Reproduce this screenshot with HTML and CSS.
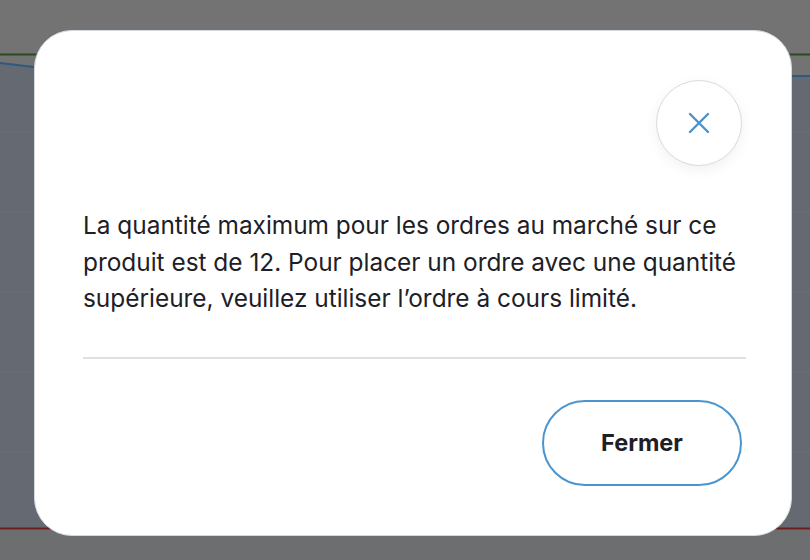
FILE: index.html
```html
<!DOCTYPE html>
<html lang="fr">
<head>
    <meta charset="UTF-8">
    <meta name="viewport" content="width=device-width, initial-scale=1.0">
    <title>Quantité maximum</title>
    <link rel="stylesheet" href="styles.css">
</head>
<body>
    <!-- Price chart behind the dialog -->
    <div class="chart">
        <svg width="810" height="560" viewBox="0 0 810 560">
            <path d="M0 63 L34 67 L400 70 L795 76 L810 76 L810 528 L0 528 Z" fill="#656a72"/>
            <g stroke="#6a6f77" stroke-width="1">
                <line x1="0" y1="132" x2="810" y2="132"/>
                <line x1="0" y1="212" x2="810" y2="212"/>
                <line x1="0" y1="292" x2="810" y2="292"/>
                <line x1="0" y1="372" x2="810" y2="372"/>
                <line x1="0" y1="452" x2="810" y2="452"/>
            </g>
            <line x1="0" y1="54.5" x2="810" y2="54.5" stroke="#2c4a22" stroke-width="2"/>
            <polyline points="0,63 34,67 400,70 795,76 810,76" fill="none" stroke="#2d5a80" stroke-width="2"/>
            <line x1="0" y1="528.5" x2="810" y2="528.5" stroke="#6e1c1e" stroke-width="2"/>
            <rect x="0" y="530" width="810" height="30" fill="#6d6e70"/>
        </svg>
    </div>

    <!-- Market order limit dialog -->
    <div class="overlay">
        <div class="dialog">
            <div class="dialog-header">
                <button class="close-btn" aria-label="Fermer">
                    <svg width="22" height="22" viewBox="0 0 22 22">
                        <path d="M2 2 L20 20 M20 2 L2 20" stroke="#4a93cd" stroke-width="2.4" stroke-linecap="round"/>
                    </svg>
                </button>
            </div>
            <p class="dialog-text">La quantité maximum pour les ordres au marché sur ce produit est de 12. Pour placer un ordre avec une quantité supérieure, veuillez utiliser l’ordre à cours limité.</p>
            <div class="divider"></div>
            <div class="dialog-footer">
                <button class="primary-btn">Fermer</button>
            </div>
        </div>
    </div>
</body>
</html>
```

FILE: styles.css
```css
body {
    margin: 0;
    width: 810px;
    height: 560px;
    overflow: hidden;
    background: #737373;
    font-family: 'Inter', 'Noto Sans', sans-serif;
}

.chart {
    position: absolute;
    left: 0;
    top: 0;
}

.chart svg {
    display: block;
}

.overlay {
    position: absolute;
    left: 0;
    top: 0;
    width: 810px;
    height: 560px;
}

.dialog {
    box-sizing: border-box;
    width: 758px;
    height: 506px;
    margin: 30px 0 0 34px;
    padding: 49px 45px 49px 48px;
    background: #fff;
    border: 1px solid #d3d9de;
    border-radius: 38px;
    display: flex;
    flex-direction: column;
}

.dialog-header {
    display: flex;
    justify-content: flex-end;
    padding-right: 4px;
}

.close-btn {
    width: 86px;
    height: 86px;
    border-radius: 50%;
    border: 1px solid #d6dce1;
    background: #fff;
    box-shadow: 0 4px 14px rgba(0, 0, 0, 0.06);
    display: flex;
    align-items: center;
    justify-content: center;
    padding: 0;
    cursor: pointer;
}

.dialog-text {
    margin: 41px -30px 0 0;
    font-size: 24.4px;
    line-height: 36.5px;
    color: #1d2026;
}

.divider {
    height: 2px;
    background: #dde1e5;
    margin-top: 40px;
}

.dialog-footer {
    display: flex;
    justify-content: flex-end;
    margin-top: 41px;
    padding-right: 4px;
}

.primary-btn {
    box-sizing: border-box;
    width: 200px;
    height: 86px;
    border: 2px solid #4a95cf;
    border-radius: 43px;
    background: #fff;
    font-family: 'Inter', 'Noto Sans', sans-serif;
    font-size: 23.5px;
    font-weight: 700;
    color: #1d2026;
    cursor: pointer;
}
```
